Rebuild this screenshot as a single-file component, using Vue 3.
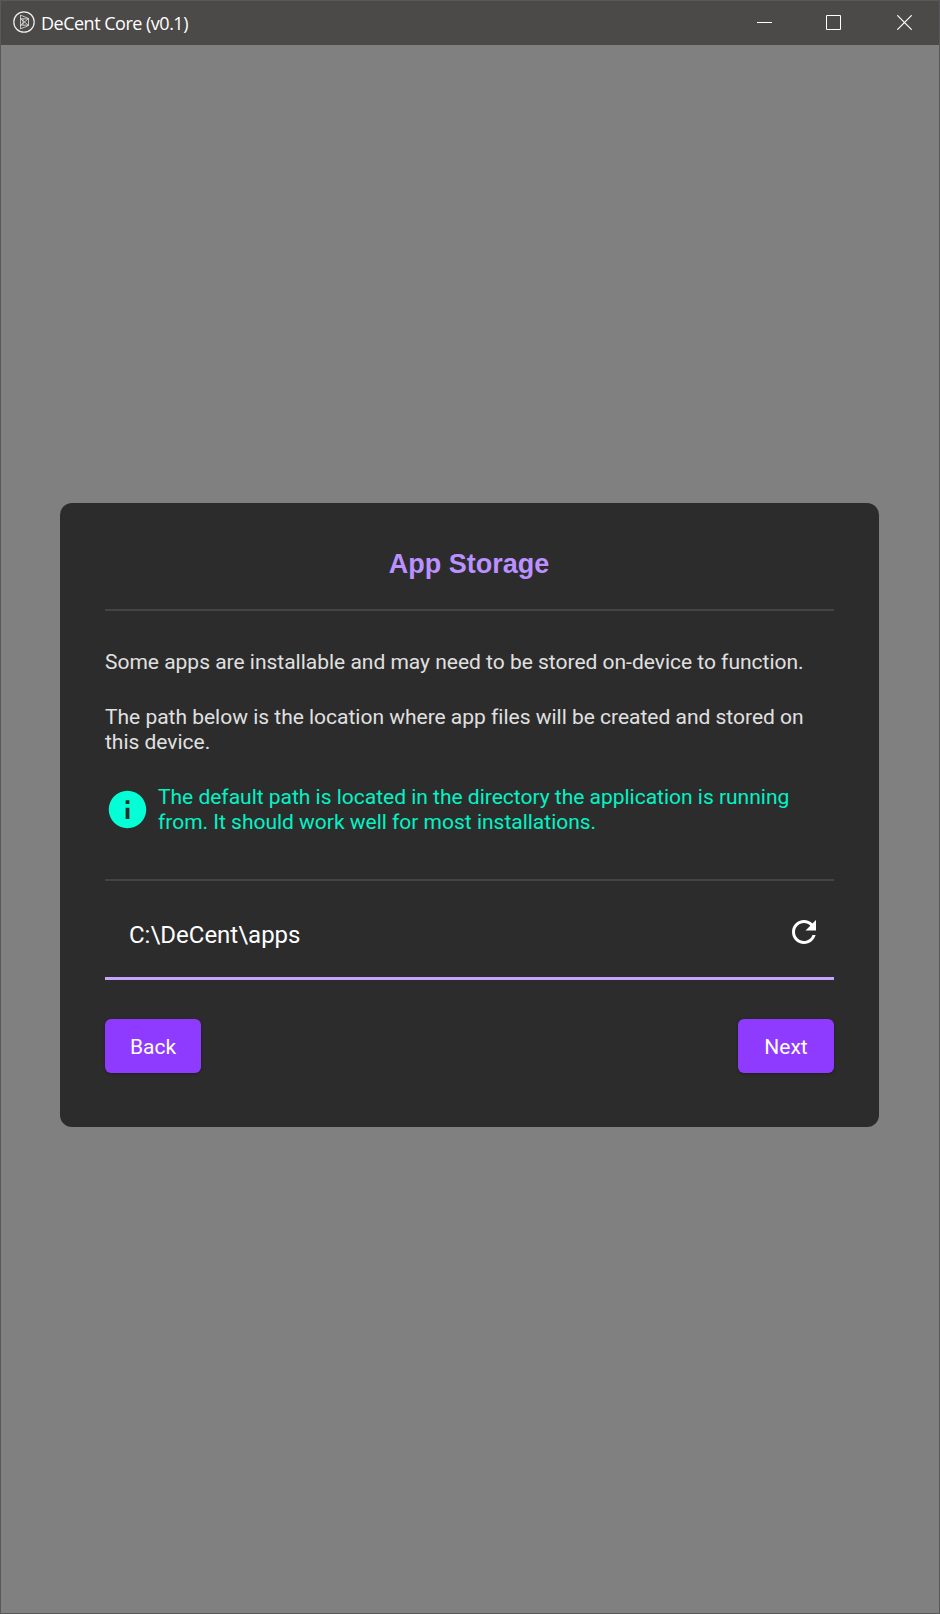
<script setup>
import { ref } from 'vue'

const path = ref('C:\\DeCent\\apps')
</script>

<template>
  <div class="window">
    <header class="titlebar">
      <svg class="logo" viewBox="0 0 22 22" width="22" height="22">
        <circle cx="11" cy="11" r="10.2" fill="none" stroke="#f0f0f0" stroke-width="1.2" />
        <g fill="none" stroke="#e4e4e4" stroke-width="0.8">
          <path d="M7.5 4.2V17.8L15.5 14.6V7.4Z" />
          <path d="M7.5 7.8H15.5M7.5 14.2H15.5M7.5 14.2L15.5 7.6M7.5 7.8L15.5 14.4M10 8V14" />
        </g>
      </svg>
      <span class="name">DeCent Core (v0.1)</span>
      <div class="controls">
        <svg viewBox="0 0 15 15" width="15" height="15"><path d="M0 7.5H15" /></svg>
        <svg viewBox="0 0 15 15" width="15" height="15"><path d="M.5 .5H14.5V14.5H.5Z" /></svg>
        <svg class="close" viewBox="0 0 15 15" width="15" height="15"><path d="M.3 .3L14.7 14.7M14.7 .3L.3 14.7" /></svg>
      </div>
    </header>

    <main class="content">
      <section class="card">
        <h1>App Storage</h1>
        <div class="info">
          <p>Some apps are installable and may need to be stored on-device to function.</p>
          <p>The path below is the location where app files will be created and stored on this device.</p>
          <div class="hint">
            <svg viewBox="0 0 24 24" width="45" height="45">
              <path d="M12 2C6.48 2 2 6.48 2 12s4.48 10 10 10 10-4.48 10-10S17.52 2 12 2zm1 15h-2v-6h2v6zm0-8h-2V7h2v2z" />
            </svg>
            <span>The default path is located in the directory the application is running from. It should work well for most installations.</span>
          </div>
        </div>
        <div class="field">
          <span>{{ path }}</span>
          <svg viewBox="0 0 24 24" width="36" height="36">
            <path d="M17.65 6.35C16.2 4.9 14.21 4 12 4c-4.42 0-7.99 3.58-7.99 8s3.57 8 7.99 8c3.73 0 6.84-2.55 7.73-6h-2.08c-.82 2.33-3.04 4-5.65 4-3.31 0-6-2.69-6-6s2.69-6 6-6c1.66 0 3.14.69 4.22 1.78L13 11h7V4l-2.35 2.35z" />
          </svg>
        </div>
        <div class="actions">
          <button type="button">Back</button>
          <button type="button">Next</button>
        </div>
      </section>
    </main>
  </div>
</template>

<style>
body {
  margin: 0;
}
</style>

<style scoped>
.window {
  box-sizing: border-box;
  width: 940px;
  height: 1614px;
  display: flex;
  flex-direction: column;
  border: 1px solid #5a5959;
  background: #808080;
  font-family: Roboto, sans-serif;
}

.titlebar {
  flex: none;
  display: flex;
  align-items: center;
  box-sizing: border-box;
  height: 44px;
  padding: 0 27px 0 12px;
  background: #4b4a48;
  color: #fff;
}

.logo {
  margin-top: -2px;
}

.name {
  margin-left: 6px;
  font: 18px/24px "Open Sans", sans-serif;
  letter-spacing: -0.5px;
  white-space: nowrap;
}

.controls {
  display: flex;
  gap: 54px;
  margin: -1px 0 0 auto;
}

.controls svg {
  display: block;
  fill: none;
  stroke: #fff;
  stroke-width: 1;
}

.controls .close {
  margin-left: 2px;
  stroke-width: 1.2;
}

.content {
  flex: 1;
  padding: 458px 60px 0 59px;
}

.card {
  box-sizing: border-box;
  height: 624px;
  padding: 45px;
  border-radius: 12px;
  background: #2c2c2c;
}

h1 {
  box-sizing: border-box;
  height: 63px;
  margin: 0;
  padding-right: 1px;
  border-bottom: 2px solid #444;
  color: #bb90ff;
  font: bold 27px/32px "Liberation Sans", Arial, sans-serif;
  text-align: center;
}

.info {
  box-sizing: border-box;
  height: 270px;
  padding-top: 39px;
  border-bottom: 2px solid #444;
  color: #e0e0e0;
  font-size: 21px;
  line-height: 25px;
  letter-spacing: -0.01px;
}

p {
  margin: 0 0 30px;
}

.hint {
  display: flex;
  align-items: center;
  gap: 8px;
  color: #03f3c5;
}

.hint svg {
  flex: none;
  margin-top: -2px;
  fill: #03ffd5;
}

.field {
  box-sizing: border-box;
  height: 99px;
  display: flex;
  align-items: center;
  justify-content: space-between;
  padding: 12px 12px 0 24px;
  border-bottom: 3px solid #c7a4ff;
  color: #fff;
  font-size: 24px;
}

.field svg {
  fill: #fff;
  margin-top: -7px;
}

.actions {
  display: flex;
  justify-content: space-between;
  margin-top: 39px;
}

button {
  width: 96px;
  height: 54px;
  padding: 2px 0 0;
  border: 0;
  border-radius: 6px;
  background: #8f3aff;
  box-shadow: 0 1px 3px rgba(0, 0, 0, 0.3);
  color: #fff;
  font: 21px/25px Roboto, sans-serif;
}
</style>
